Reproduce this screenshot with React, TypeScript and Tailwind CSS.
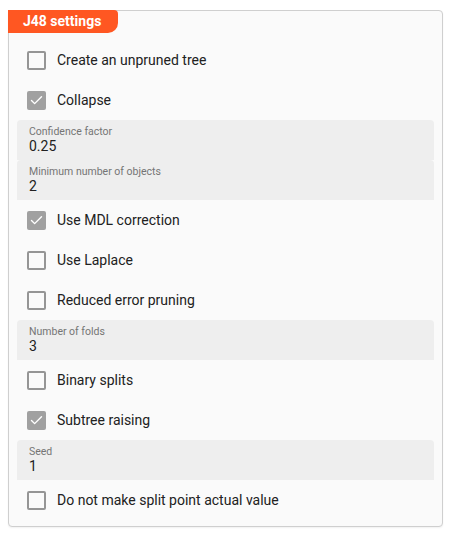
import { Check } from 'lucide-react'

type Item =
  | { kind: 'check'; label: string; checked: boolean }
  | { kind: 'field'; label: string; value: string }

const items: Item[] = [
  { kind: 'check', label: 'Create an unpruned tree', checked: false },
  { kind: 'check', label: 'Collapse', checked: true },
  { kind: 'field', label: 'Confidence factor', value: '0.25' },
  { kind: 'field', label: 'Minimum number of objects', value: '2' },
  { kind: 'check', label: 'Use MDL correction', checked: true },
  { kind: 'check', label: 'Use Laplace', checked: false },
  { kind: 'check', label: 'Reduced error pruning', checked: false },
  { kind: 'field', label: 'Number of folds', value: '3' },
  { kind: 'check', label: 'Binary splits', checked: false },
  { kind: 'check', label: 'Subtree raising', checked: true },
  { kind: 'field', label: 'Seed', value: '1' },
  { kind: 'check', label: 'Do not make split point actual value', checked: false },
]

function CheckRow({ label, checked }: { label: string; checked: boolean }) {
  return (
    <div className="flex h-[40px] items-center pl-[10px]">
      {checked ? (
        <span className="flex h-[19px] w-[19px] items-center justify-center rounded-[2px] bg-[#a0a0a0]">
          <Check size={15} strokeWidth={2.25} className="text-white" />
        </span>
      ) : (
        <span className="h-[19px] w-[19px] rounded-[2px] border-2 border-[#959595]" />
      )}
      <span className="ml-[11px] text-[14px] text-[#212121]">{label}</span>
    </div>
  )
}

function Field({ label, value }: { label: string; value: string }) {
  return (
    <div className="flex h-[40px] flex-col justify-center rounded-t-[4px] bg-[#eeeeee] pl-[12px]">
      <span className="text-[10.5px] leading-[12px] text-[#757575]">{label}</span>
      <span className="text-[14px] leading-[16px] text-[#212121]">{value}</span>
    </div>
  )
}

export default function App() {
  return (
    <div className="min-h-[537px] bg-white pt-[10px] pl-[8px]" style={{ fontFamily: 'Roboto, sans-serif' }}>
      <div className="w-[435px] rounded-[4px] border border-[#cfcfcf] bg-[#fafafa] pb-[6px] shadow-[0_1px_2px_rgba(0,0,0,0.06)]">
        <div className="flex h-[23px] w-[110px] items-center rounded-tr-[4px] rounded-br-[10px] bg-[#ff5722] pl-[15px] -mt-px -ml-px">
          <span className="text-[14px] font-bold text-white">J48 settings</span>
        </div>
        <div className="flex flex-col px-[8px] pt-[7px]">
          {items.map((it) =>
            it.kind === 'check' ? (
              <CheckRow key={it.label} label={it.label} checked={it.checked} />
            ) : (
              <Field key={it.label} label={it.label} value={it.value} />
            )
          )}
        </div>
      </div>
    </div>
  )
}
